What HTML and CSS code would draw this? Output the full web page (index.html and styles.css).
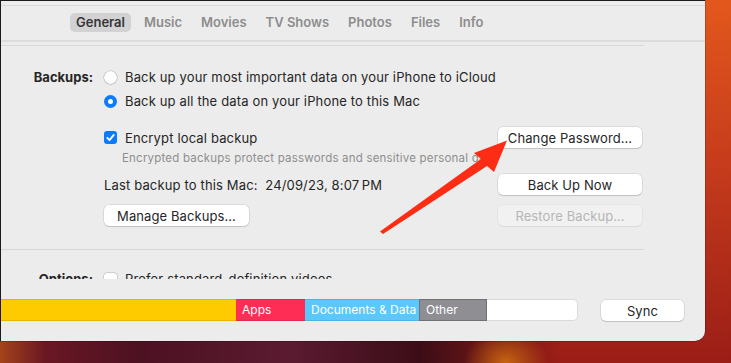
FILE: index.html
```html
<!DOCTYPE html>
<html lang="en">
<head>
  <meta charset="UTF-8" />
  <title>iPhone – General</title>
  <link rel="stylesheet" href="styles.css">
</head>
<body>
<div class="window">
  <div class="window-top"></div>
  <nav class="tabbar">
    <span class="tab active">General</span>
    <span class="tab">Music</span>
    <span class="tab">Movies</span>
    <span class="tab">TV Shows</span>
    <span class="tab">Photos</span>
    <span class="tab">Files</span>
    <span class="tab">Info</span>
  </nav>

  <section class="pane">
    <div class="row">
      <div class="label">Backups:</div>
      <div class="controls">
        <label class="option"><span class="radio"></span>Back up your most important data on your iPhone to iCloud</label>
        <label class="option second"><span class="radio on"></span>Back up all the data on your iPhone to this Mac</label>

        <div class="backup-grid">
          <div class="backup-left">
            <label class="option check-row">
              <span class="check on">
                <svg width="13" height="13" viewBox="0 0 13 13"><path d="M3.3 6.8 L5.5 9.1 L9.8 3.9" fill="none" stroke="#fff" stroke-width="1.8" stroke-linecap="round" stroke-linejoin="round"/></svg>
              </span>Encrypt local backup</label>
            <p class="hint">Encrypted backups protect passwords and sensitive personal data.</p>
            <p class="last">Last backup to this Mac:&nbsp; 24/09/23, 8:07&#8239;PM</p>
            <button class="btn manage">Manage Backups…</button>
          </div>
          <div class="backup-right">
            <button class="btn">Change Password…</button>
            <button class="btn now">Back Up Now</button>
            <button class="btn restore" disabled>Restore Backup…</button>
          </div>
        </div>
      </div>
    </div>

    <hr class="sep">

    <div class="row options">
      <div class="label">Options:</div>
      <div class="controls">
        <label class="option"><span class="check"></span>Prefer standard-definition videos</label>
      </div>
    </div>
  </section>

  <footer class="footer">
    <div class="storage">
      <div class="seg media"></div>
      <div class="seg apps">Apps</div>
      <div class="seg docs">Documents &amp; Data</div>
      <div class="seg other">Other</div>
      <div class="seg free"></div>
    </div>
    <button class="btn sync">Sync</button>
  </footer>
</div>

<!-- callout arrow over the page -->
<svg class="arrow" width="731" height="363" viewBox="0 0 731 363">
  <polygon points="380,231.5 481,159 474,153 507,140.5 494,172 487,166 383,234" fill="#fc2d14"/>
</svg>
</body>
</html>
```

FILE: styles.css
```css
/* reset */
* {
  margin: 0;
  padding: 0;
  box-sizing: border-box;
}

html, body {
  width: 731px;
  height: 363px;
  overflow: hidden;
}

/* wallpaper behind the window */
body {
  position: relative;
  font-family: "Inter", "Liberation Sans", sans-serif;
  font-size: 13px;
  color: #262626;
  background:
    radial-gradient(42px 34px at 506px 363px, #c8650f, rgba(200, 101, 15, 0)),
    linear-gradient(90deg, #a4441a 0, #6b1723 45px, #4c1122 140px, #5b1a30 290px, #3c0d17 420px, rgba(60, 13, 23, 0) 560px),
    linear-gradient(180deg, #e2581c 0, #c63c1c 45%, #9a1d16 100%);
}

.window {
  width: 705px;
  height: 341px;
  background: #ececec;
  border-top: 1px solid #1a1a1a;
  border-left: 1px solid #1a1a1a;
  border-bottom-right-radius: 10px;
  box-shadow: 0 0 0 0.5px rgba(0, 0, 0, 0.35);
  display: flex;
  flex-direction: column;
  overflow: hidden;
}

.window-top {
  height: 5px;
  border-bottom: 1px solid #dadada;
}

/* tabs */
.tabbar {
  height: 36px;
  display: flex;
  align-items: center;
  gap: 7px;
  padding-left: 69px;
  padding-bottom: 1px;
  border-bottom: 2px solid #dcdcdc;
  margin-bottom: 3px;
}

.tab {
  height: 19px;
  line-height: 19px;
  padding: 0 6px;
  border-radius: 5px;
  font-weight: 600;
  color: #8d8d8d;
}

.tab.active {
  background: #d2d2d2;
  color: #363636;
}

/* main pane */
.pane {
  width: 643px;
  height: 234px;
  border-top: 1px solid #d8d8d8;
  padding-top: 21px;
  overflow: hidden;
}

.row {
  display: flex;
}

.label {
  width: 92px;
  margin-right: 11px;
  text-align: right;
  font-weight: 700;
  line-height: 20px;
  color: #262626;
}

.controls {
  flex: 1;
  letter-spacing: 0.15px;
}

.option {
  display: flex;
  align-items: center;
  gap: 8px;
  height: 20px;
  white-space: nowrap;
}

.option.second {
  margin-top: 4px;
}

.radio {
  width: 13px;
  height: 13px;
  border-radius: 50%;
  background: #fff;
  box-shadow: 0 0 0 0.5px rgba(0, 0, 0, 0.22), 0 0.5px 1px rgba(0, 0, 0, 0.15);
  display: flex;
  align-items: center;
  justify-content: center;
}

.radio.on {
  background: #0a7bff;
  box-shadow: none;
}

.radio.on::after {
  content: "";
  width: 5px;
  height: 5px;
  border-radius: 50%;
  background: #fff;
}

.check {
  width: 13px;
  height: 13px;
  border-radius: 3px;
  background: #fff;
  box-shadow: 0 0 0 0.5px rgba(0, 0, 0, 0.22), 0 0.5px 1px rgba(0, 0, 0, 0.15);
  display: flex;
}

.check.on {
  background: #0a7bff;
  box-shadow: none;
}

/* backup block: left texts, right buttons */
.backup-grid {
  margin-top: 16px;
  display: grid;
  grid-template-columns: 394px 144px;
}

.check-row {
  height: 21px;
}

.hint {
  margin-top: 3px;
  padding-left: 18px;
  font-size: 11.5px;
  letter-spacing: 0.2px;
  line-height: 14px;
  color: #8e8e8e;
  white-space: nowrap;
  overflow: hidden;
}

.last {
  margin-top: 12px;
  line-height: 16px;
}

.btn {
  display: block;
  width: 144px;
  height: 21px;
  border: none;
  border-radius: 5px;
  background: #fff;
  font-family: inherit;
  font-size: 13px;
  letter-spacing: 0.1px;
  color: #262626;
  box-shadow: 0 0 0 0.5px rgba(0, 0, 0, 0.14), 0 1px 1px rgba(0, 0, 0, 0.12);
}

.btn.manage {
  width: 145px;
  margin-top: 12px;
}

.btn.now {
  margin-top: 26px;
}

.btn.restore {
  margin-top: 10px;
  background: #f1f1f1;
  color: #b6b6b6;
  box-shadow: 0 0 0 0.5px rgba(0, 0, 0, 0.06), 0 1px 1px rgba(0, 0, 0, 0.05);
}

.sep {
  border: none;
  border-top: 1px solid #d6d6d6;
  margin-top: 23px;
}

.options {
  margin-top: 19px;
}

/* storage bar + sync */
.footer {
  height: 62px;
  padding-top: 20px;
  display: flex;
  align-items: flex-start;
}

.storage {
  width: 577px;
  height: 22px;
  display: flex;
}

.seg {
  height: 22px;
  line-height: 20px;
  padding-left: 6px;
  font-size: 12px;
  color: #fff;
  white-space: nowrap;
  border-top: 1px solid rgba(0, 0, 0, 0.1);
  border-bottom: 1px solid rgba(0, 0, 0, 0.1);
}

.seg.media { width: 235px; background: #fecb00; }
.seg.apps { width: 69px; background: #fd2d55; }
.seg.docs { width: 114px; background: #5ac8fa; }
.seg.other { width: 68px; background: #8e8e93; border: 1px solid #707075; }

.seg.free {
  flex: 1;
  background: #fff;
  border: 1px solid #d9d9d9;
  border-left: none;
  border-radius: 0 5px 5px 0;
}

.btn.sync {
  width: 83px;
  margin-left: 23px;
  margin-top: 1px;
}

.arrow {
  position: absolute;
  left: 0;
  top: 0;
  pointer-events: none;
}
```
